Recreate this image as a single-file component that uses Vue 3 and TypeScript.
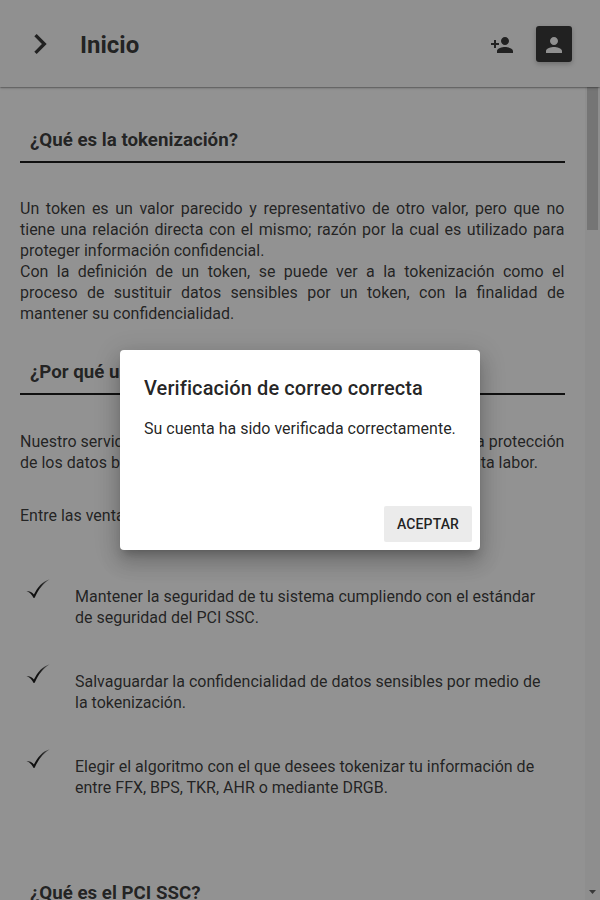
<script setup lang="ts">
const benefits: string[][] = [
  ['Mantener la seguridad de tu sistema cumpliendo con el estándar', 'de seguridad del PCI SSC.'],
  ['Salvaguardar la confidencialidad de datos sensibles por medio de', 'la tokenización.'],
  ['Elegir el algoritmo con el que desees tokenizar tu información de', 'entre FFX, BPS, TKR, AHR o mediante DRGB.'],
]
</script>

<template>
  <div class="page">
    <header class="toolbar">
      <svg class="chevron" viewBox="0 0 24 24" width="40" height="40"><path d="M8.59 16.59 13.17 12 8.59 7.41 10 6l6 6-6 6z" /></svg>
      <h2>Inicio</h2>
      <svg class="add" viewBox="0 0 24 24" width="24" height="24"><path d="M15 12c2.21 0 4-1.79 4-4s-1.79-4-4-4-4 1.79-4 4 1.79 4 4 4zm-9-2V7H4v3H1v2h3v3h2v-3h3v-2H6zm9 4c-2.67 0-8 1.34-8 4v2h16v-2c0-2.66-5.33-4-8-4z" /></svg>
      <button class="account" type="button" aria-label="Cuenta">
        <svg viewBox="0 0 24 24" width="24" height="24"><path d="M12 12c2.21 0 4-1.79 4-4s-1.79-4-4-4-4 1.79-4 4 1.79 4 4 4zm0 2c-2.67 0-8 1.34-8 4v2h16v-2c0-2.66-5.33-4-8-4z" /></svg>
      </button>
    </header>

    <div class="body">
      <main class="content">
        <h3>¿Qué es la tokenización?</h3>
        <div class="prose">
          <p>Un token es un valor parecido y representativo de otro valor, pero que no tiene una relación directa con el mismo; razón por la cual es utilizado para proteger información confidencial.</p>
          <p>Con la definición de un token, se puede ver a la tokenización como el proceso de sustituir datos sensibles por un token, con la finalidad de mantener su confidencialidad.</p>
        </div>
        <h3>¿Por qué usarla?</h3>
        <div class="prose service">
          <p class="line"><span>Nuestro servicio</span><span>apoya la protección</span></p>
          <p class="line short"><span>de los datos bancarios</span><span>en esta labor.</span></p>
        </div>
        <p class="intro">Entre las ventajas se encuentran:</p>
        <ul>
          <li v-for="item in benefits" :key="item[0]">
            <svg class="check" viewBox="0 0 30 30" width="30" height="30">
              <defs>
                <linearGradient id="ink" x1="0" y1="0" x2="1" y2="0"><stop offset="0" stop-color="#000" stop-opacity=".6" /><stop offset=".2" stop-color="#000" /><stop offset=".5" stop-color="#000" /><stop offset="1" stop-color="#000" stop-opacity=".45" /></linearGradient>
              </defs>
              <path fill="url(#ink)" d="M1.4 16 C4.4 15.8 7 17 8.9 19.6 C12.6 12 17.6 6.2 24.8 4.2 C18.6 8 13.4 14 9.7 22.8 L8.6 23 C7 19.8 4.8 17.4 1.4 16Z" />
            </svg>
            <p><span v-for="row in item" :key="row">{{ row }}</span></p>
          </li>
        </ul>
        <h3 class="last">¿Qué es el PCI SSC?</h3>
      </main>
      <div class="track">
        <div class="thumb"></div>
        <svg width="15" height="15" viewBox="0 0 15 15"><path d="M4 5h7L7.5 9z" /></svg>
      </div>
    </div>

    <div class="backdrop">
      <section class="dialog" role="dialog">
        <h2>Verificación de correo correcta</h2>
        <p>Su cuenta ha sido verificada correctamente.</p>
        <button type="button">ACEPTAR</button>
      </section>
    </div>
  </div>
</template>

<style>
body { margin: 0; overflow: hidden; }
</style>

<style scoped>
.page {
  position: relative;
  display: flex;
  flex-direction: column;
  width: 600px;
  height: 900px;
  overflow: hidden;
  background: #fafafa;
  color: rgba(0, 0, 0, .87);
  font: 16px/21px Roboto, sans-serif;
}
h2, h3, p, ul { margin: 0; padding: 0; }
.toolbar {
  display: flex;
  align-items: center;
  box-sizing: border-box;
  flex: none;
  height: 87px;
  padding: 1px 28px 0 20px;
  background: #f5f5f5;
  box-shadow: 0 1px 3px rgba(0, 0, 0, .2), 0 1px 1px rgba(0, 0, 0, .14), 0 2px 1px -1px rgba(0, 0, 0, .12);
  z-index: 1;
}
.toolbar svg { fill: #212121; }
.toolbar h2 { flex: 1; margin-left: 20px; font-size: 24px; line-height: 30px; padding-top: 1px; }
.toolbar .add { margin: 2px 22px 0 0; }
.account {
  display: grid;
  place-items: center;
  box-sizing: border-box;
  width: 36px;
  height: 36px;
  padding: 2px 0 0;
  border: 0;
  border-radius: 3px;
  background: #212121;
  box-shadow: 0 2px 5px rgba(0, 0, 0, .26);
}
.toolbar .account svg { fill: #f5f5f5; }
.body { display: flex; flex: 1; min-height: 0; }
.content { flex: 1; padding: 40px 20px 0; overflow: hidden; }
h3 {
  height: 34px;
  padding-left: 10px;
  border-bottom: 2px solid #000;
  font-size: 18.72px;
  line-height: 26px;
}
.prose { width: 544.4px; margin: 35px 0; text-align: justify; }
.line { display: flex; justify-content: space-between; white-space: nowrap; }
.short { width: 518px; }
.prose.service { margin: 36px 0 32px; }
ul { list-style: none; margin-top: 49px; }
li { display: flex; height: 85px; }
.check { flex: none; margin: 0 20px 0 5px; }
li p { padding-top: 11px; white-space: nowrap; }
li span { display: block; }
.last { margin-top: 50px; }
.track {
  display: flex;
  flex-direction: column;
  align-items: center;
  justify-content: space-between;
  width: 15px;
  background: #f1f1f1;
}
.thumb { width: 11px; height: 143px; background: #c1c1c1; }
.track svg { fill: #505050; }
.backdrop {
  position: absolute;
  inset: 0;
  z-index: 2;
  display: grid;
  place-items: center;
  background: rgba(33, 33, 33, .48);
}
.dialog {
  display: flex;
  flex-direction: column;
  box-sizing: border-box;
  width: 360px;
  height: 200px;
  padding: 24px 8px 8px 24px;
  border-radius: 4px;
  background: #fff;
  box-shadow: 0 7px 8px -4px rgba(0, 0, 0, .2), 0 13px 19px 2px rgba(0, 0, 0, .14), 0 5px 24px 4px rgba(0, 0, 0, .12);
}
.dialog h2 { font-size: 20px; font-weight: 500; line-height: 28px; letter-spacing: .1px; }
.dialog p { margin-top: 16px; white-space: nowrap; }
.dialog button {
  align-self: flex-end;
  width: 88px;
  height: 36px;
  margin-top: auto;
  padding: 0;
  border: 0;
  border-radius: 2px;
  background: #ebebeb;
  color: rgba(0, 0, 0, .87);
  font: 500 14px/36px Roboto, sans-serif;
  letter-spacing: .14px;
}
</style>
